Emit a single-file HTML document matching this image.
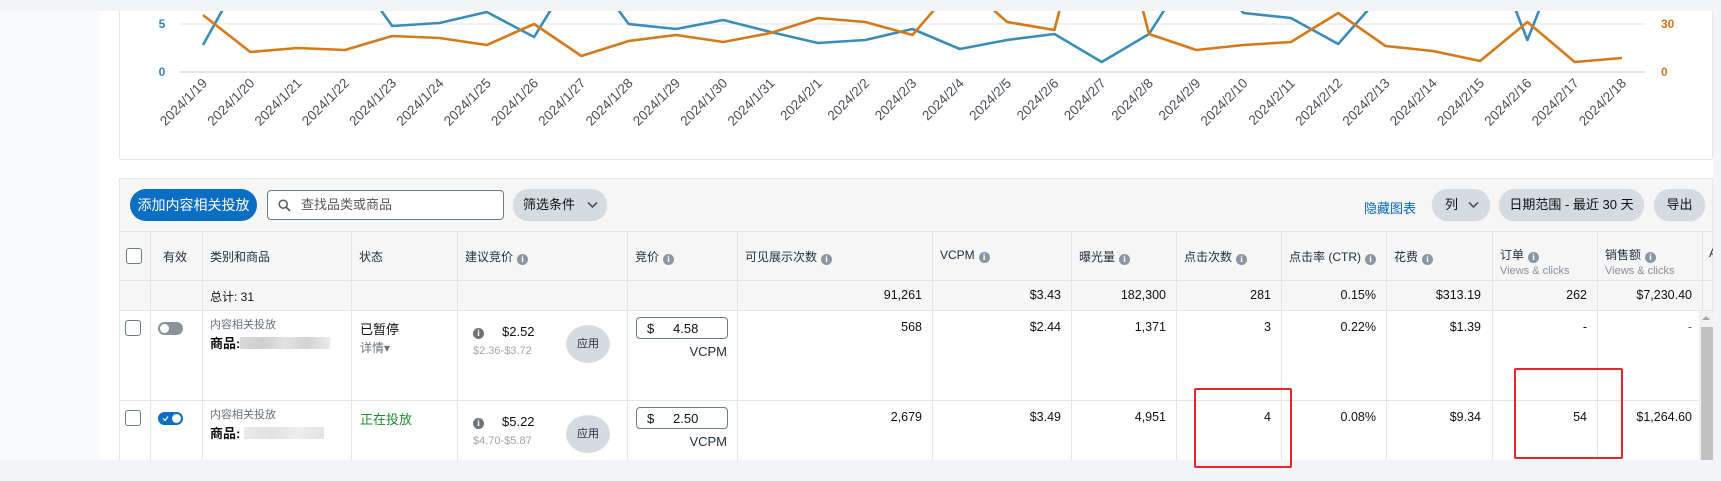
<!DOCTYPE html>
<html><head><meta charset="utf-8">
<style>
*{margin:0;padding:0;box-sizing:border-box}
body{width:1721px;height:481px;overflow:hidden;background:#f3f4f7;font-family:"Liberation Sans","Noto Sans CJK SC",sans-serif;color:#0f1111;position:relative}
.abs{position:absolute}
.left{left:0;top:11px;width:100px;height:449px;background:#f9fafb}
.main{left:100px;top:11px;width:1613px;height:449px;background:#fff}
.card{border:1px solid #e3e6e6;border-radius:3px;background:#fff}
.t{position:absolute;font-size:12.5px;white-space:nowrap}
.r{text-align:right}
.hd{font-size:12px;color:#232f3e}
.i{display:inline-block;width:11px;height:11px;border-radius:50%;background:#8b96a3;color:#fff;font-size:9px;line-height:11px;text-align:center;font-weight:bold;vertical-align:-1px;margin-left:4px;font-family:"Liberation Serif",serif}
.vl{position:absolute;width:1px;background:#e3e6e6}
.hl{position:absolute;height:1px;background:#e3e6e6}
.pill{position:absolute;border-radius:16px;background:#d5dbe1;font-size:13px;color:#0f1111;text-align:center;box-shadow:0 1px 1px rgba(0,0,0,.15)}
.cb{position:absolute;width:16px;height:16px;border:1px solid #6f7b8b;border-radius:3px;background:#fff}
.apply{position:absolute;width:44px;height:38px;border-radius:50%;background:#d5dbe1;font-size:11px;line-height:38px;text-align:center;color:#232f3e}
.inp{position:absolute;width:92px;height:22px;border:1px solid #6f7b8b;border-radius:4px;font-size:13px}
.blur{position:absolute;height:12px;background:linear-gradient(90deg,#d8d8d8,#cfcfcf,#e2e2e2,#d2d2d2,#ececec)}
</style></head><body>
<div class="abs left"></div>
<div class="abs main"></div>
<div class="abs card" style="left:119px;top:0px;width:1594px;height:160px;border-top:none"></div>
<div class="abs" style="left:0;top:0;width:1721px;height:11px;background:#f3f4f7"></div>
<svg class="abs" style="left:0;top:0" width="1721" height="160" viewBox="0 0 1721 160">
<defs><clipPath id="c"><rect x="119" y="11" width="1594" height="148"/></clipPath></defs>
<line x1="180" y1="24" x2="1645" y2="24" stroke="#e3e6e6" stroke-width="1"/>
<line x1="180" y1="72" x2="1645" y2="72" stroke="#c3cad4" stroke-width="1"/>
<g font-family="Liberation Sans, sans-serif" font-size="12" font-weight="bold">
<text x="162" y="28" fill="#3c83b5" text-anchor="middle">5</text>
<text x="162" y="76" fill="#3c83b5" text-anchor="middle">0</text>
<text x="1661" y="28" fill="#d4761c">30</text>
<text x="1661" y="76" fill="#d4761c">0</text>
</g>
<g clip-path="url(#c)" fill="none" stroke-width="2.6" stroke-linejoin="round">
<polyline stroke="#3a8db8" points="203,45 250.3,-40 297.6,-40 344.9,-40 392.2,26 439.5,23 486.8,12 534.1,37 581.4,-40 628.7,24 676,29 723.3,20 770.6,32 817.9,43 865.2,40 912.5,29 959.8,49 1007.1,40 1054.4,34 1101.7,62 1149,34 1196.3,-40 1243.6,13 1290.9,18 1338.2,44 1385.5,-10 1432.8,-40 1480.1,-80 1527.4,40 1574.7,-80 1622,-80"/>
<polyline stroke="#d47a1a" points="203,15 250.3,52 297.6,48 344.9,50 392.2,36 439.5,38 486.8,45 534.1,24 581.4,56 628.7,41 676,35 723.3,42 770.6,33 817.9,18 865.2,22 912.5,35 959.8,-20 1007.1,22 1054.4,30 1101.7,-150 1149,34 1196.3,50 1243.6,45 1290.9,42 1338.2,13 1385.5,46 1432.8,51 1480.1,61 1527.4,22 1574.7,62 1622,58"/>
</g>
<g font-family="Liberation Sans, sans-serif" font-size="13.5" fill="#4a4f55" text-anchor="end">
<text transform="translate(208,84) rotate(-45)">2024/1/19</text>
<text transform="translate(255.3,84) rotate(-45)">2024/1/20</text>
<text transform="translate(302.6,84) rotate(-45)">2024/1/21</text>
<text transform="translate(349.9,84) rotate(-45)">2024/1/22</text>
<text transform="translate(397.2,84) rotate(-45)">2024/1/23</text>
<text transform="translate(444.5,84) rotate(-45)">2024/1/24</text>
<text transform="translate(491.8,84) rotate(-45)">2024/1/25</text>
<text transform="translate(539.1,84) rotate(-45)">2024/1/26</text>
<text transform="translate(586.4,84) rotate(-45)">2024/1/27</text>
<text transform="translate(633.7,84) rotate(-45)">2024/1/28</text>
<text transform="translate(681,84) rotate(-45)">2024/1/29</text>
<text transform="translate(728.3,84) rotate(-45)">2024/1/30</text>
<text transform="translate(775.6,84) rotate(-45)">2024/1/31</text>
<text transform="translate(822.9,84) rotate(-45)">2024/2/1</text>
<text transform="translate(870.2,84) rotate(-45)">2024/2/2</text>
<text transform="translate(917.5,84) rotate(-45)">2024/2/3</text>
<text transform="translate(964.8,84) rotate(-45)">2024/2/4</text>
<text transform="translate(1012.1,84) rotate(-45)">2024/2/5</text>
<text transform="translate(1059.4,84) rotate(-45)">2024/2/6</text>
<text transform="translate(1106.7,84) rotate(-45)">2024/2/7</text>
<text transform="translate(1154,84) rotate(-45)">2024/2/8</text>
<text transform="translate(1201.3,84) rotate(-45)">2024/2/9</text>
<text transform="translate(1248.6,84) rotate(-45)">2024/2/10</text>
<text transform="translate(1295.9,84) rotate(-45)">2024/2/11</text>
<text transform="translate(1343.2,84) rotate(-45)">2024/2/12</text>
<text transform="translate(1390.5,84) rotate(-45)">2024/2/13</text>
<text transform="translate(1437.8,84) rotate(-45)">2024/2/14</text>
<text transform="translate(1485.1,84) rotate(-45)">2024/2/15</text>
<text transform="translate(1532.4,84) rotate(-45)">2024/2/16</text>
<text transform="translate(1579.7,84) rotate(-45)">2024/2/17</text>
<text transform="translate(1627,84) rotate(-45)">2024/2/18</text>
</g>
</svg>

<div class="abs" style="left:119px;top:178px;width:1594px;height:282px;background:#fff;border:1px solid #e3e6e6;border-bottom:none;overflow:hidden">
<div class="abs" style="left:0;top:0;width:1594px;height:132px;background:#f6f6f6"></div>
</div>
<div class="hl" style="left:119px;top:231px;width:1594px"></div>
<div class="hl" style="left:119px;top:280px;width:1594px"></div>
<div class="hl" style="left:119px;top:310px;width:1594px"></div>
<div class="hl" style="left:119px;top:400px;width:1580px"></div>
<div class="vl" style="left:150px;top:231px;height:229px"></div>
<div class="vl" style="left:202px;top:231px;height:229px"></div>
<div class="vl" style="left:351px;top:231px;height:229px"></div>
<div class="vl" style="left:457px;top:231px;height:229px"></div>
<div class="vl" style="left:627px;top:231px;height:229px"></div>
<div class="vl" style="left:737px;top:231px;height:229px"></div>
<div class="vl" style="left:932px;top:231px;height:229px"></div>
<div class="vl" style="left:1071px;top:231px;height:229px"></div>
<div class="vl" style="left:1176px;top:231px;height:229px"></div>
<div class="vl" style="left:1281px;top:231px;height:229px"></div>
<div class="vl" style="left:1386px;top:231px;height:229px"></div>
<div class="vl" style="left:1492px;top:231px;height:229px"></div>
<div class="vl" style="left:1597px;top:231px;height:229px"></div>
<div class="vl" style="left:1702px;top:231px;height:79px"></div>

<div class="abs" style="left:130px;top:189px;width:127px;height:32px;border-radius:16px;background:#0a6fc2;color:#fff;font-size:14px;line-height:32px;text-align:center">添加内容相关投放</div>
<div class="abs" style="left:267px;top:190px;width:237px;height:30px;border:1px solid #6f7b8b;border-radius:4px;background:#fff;font-size:13px;line-height:28px;color:#565959;padding-left:33px">查找品类或商品
<svg class="abs" style="left:10px;top:8px" width="13" height="13" viewBox="0 0 13 13"><circle cx="5.2" cy="5.2" r="4" fill="none" stroke="#565959" stroke-width="1.5"/><line x1="8.2" y1="8.2" x2="12" y2="12" stroke="#565959" stroke-width="1.6"/></svg></div>
<div class="pill" style="left:513px;top:189px;width:94px;height:31px;line-height:31px;text-align:left;padding-left:10px">筛选条件<svg class="abs" style="left:74px;top:12px" width="11" height="8" viewBox="0 0 11 8"><path d="M1 1.5 L5.5 6 L10 1.5" fill="none" stroke="#4a5561" stroke-width="1.6"/></svg></div>
<div class="t" style="left:1364px;top:198px;font-size:13px;color:#0066c0">隐藏图表</div>
<div class="pill" style="left:1432px;top:189px;width:58px;height:31px;line-height:31px;text-align:left;padding-left:13px">列<svg class="abs" style="left:36px;top:12px" width="11" height="8" viewBox="0 0 11 8"><path d="M1 1.5 L5.5 6 L10 1.5" fill="none" stroke="#4a5561" stroke-width="1.6"/></svg></div>
<div class="pill" style="left:1499px;top:189px;width:145px;height:31px;line-height:31px">日期范围 - 最近 30 天</div>
<div class="pill" style="left:1654px;top:189px;width:51px;height:31px;line-height:31px">导出</div>

<div class="cb" style="left:126px;top:248px"></div>
<div class="t hd" style="left:163px;top:248px">有效</div>
<div class="t hd" style="left:210px;top:248px">类别和商品</div>
<div class="t hd" style="left:359px;top:248px">状态</div>
<div class="t hd" style="left:465px;top:248px">建议竞价<span class="i">i</span></div>
<div class="t hd" style="left:635px;top:248px">竞价<span class="i">i</span></div>
<div class="t hd" style="left:745px;top:248px">可见展示次数<span class="i">i</span></div>
<div class="t hd" style="left:940px;top:248px">VCPM<span class="i">i</span></div>
<div class="t hd" style="left:1079px;top:248px">曝光量<span class="i">i</span></div>
<div class="t hd" style="left:1184px;top:248px">点击次数<span class="i">i</span></div>
<div class="t hd" style="left:1289px;top:248px">点击率 (CTR)<span class="i">i</span></div>
<div class="t hd" style="left:1394px;top:248px">花费<span class="i">i</span></div>
<div class="t hd" style="left:1500px;top:246px">订单<span class="i">i</span></div>
<div class="t" style="left:1500px;top:265px;font-size:11px;color:#8a9099">Views &amp; clicks</div>
<div class="t hd" style="left:1605px;top:246px">销售额<span class="i">i</span></div>
<div class="t" style="left:1605px;top:265px;font-size:11px;color:#8a9099">Views &amp; clicks</div>
<div class="t hd" style="left:1709px;top:246px">A</div>

<div class="t" style="left:210px;top:288px;font-size:12px">总计: 31</div>
<div class="t r" style="right:799px;top:288px">91,261</div>
<div class="t r" style="right:660px;top:288px">$3.43</div>
<div class="t r" style="right:555px;top:288px">182,300</div>
<div class="t r" style="right:450px;top:288px">281</div>
<div class="t r" style="right:345px;top:288px">0.15%</div>
<div class="t r" style="right:240px;top:288px">$313.19</div>
<div class="t r" style="right:134px;top:288px">262</div>
<div class="t r" style="right:29px;top:288px">$7,230.40</div>

<div class="cb" style="left:125px;top:320px"></div>
<div class="abs" style="left:158px;top:322px;width:25px;height:13px;border-radius:7px;background:#8a929c"><div class="abs" style="left:2px;top:2px;width:9px;height:9px;border-radius:50%;background:#fff"></div></div>
<div class="t" style="left:210px;top:316px;font-size:11px;color:#6b7079">内容相关投放</div>
<div class="t" style="left:210px;top:333px;font-size:13px;font-weight:bold">商品:</div>
<div class="blur" style="left:240px;top:337px;width:90px"></div>
<div class="t" style="left:360px;top:319px;font-size:13px">已暂停</div>
<div class="t" style="left:360px;top:339px;font-size:12px;color:#6b7079">详情▾</div>
<div class="t" style="left:473px;top:324px"><span class="i" style="background:#6f7479;margin:0">i</span></div>
<div class="t" style="left:502px;top:324px;font-size:13px">$2.52</div>
<div class="t" style="left:473px;top:345px;font-size:11px;color:#a0a6ad">$2.36-$3.72</div>
<div class="apply" style="left:566px;top:325px">应用</div>
<div class="inp" style="left:636px;top:317px"><span class="abs" style="left:10px;top:3px">$</span><span class="abs" style="left:36px;top:3px">4.58</span></div>
<div class="t r" style="right:994px;top:344px;font-size:13px;color:#232f3e">VCPM</div>
<div class="t r" style="right:799px;top:320px">568</div>
<div class="t r" style="right:660px;top:320px">$2.44</div>
<div class="t r" style="right:555px;top:320px">1,371</div>
<div class="t r" style="right:450px;top:320px">3</div>
<div class="t r" style="right:345px;top:320px">0.22%</div>
<div class="t r" style="right:240px;top:320px">$1.39</div>
<div class="t r" style="right:134px;top:320px">-</div>
<div class="t r" style="right:29px;top:320px;color:#666">-</div>

<div class="cb" style="left:125px;top:410px"></div>
<div class="abs" style="left:158px;top:412px;width:25px;height:13px;border-radius:7px;background:#0a6fc2"><div class="abs" style="right:2px;top:2px;width:9px;height:9px;border-radius:50%;background:#fff"></div><svg class="abs" style="left:4px;top:3px" width="7" height="7" viewBox="0 0 7 7"><path d="M1 3.5 L3 5.5 L6 1.5" fill="none" stroke="#fff" stroke-width="1.2"/></svg></div>
<div class="t" style="left:210px;top:406px;font-size:11px;color:#6b7079">内容相关投放</div>
<div class="t" style="left:210px;top:423px;font-size:13px;font-weight:bold">商品:</div>
<div class="blur" style="left:244px;top:427px;width:80px;background:linear-gradient(90deg,#eaeaea,#e2e2e2,#ececec,#e4e4e4)"></div>
<div class="t" style="left:360px;top:409px;font-size:13px;color:#1f8a2c">正在投放</div>
<div class="t" style="left:473px;top:414px"><span class="i" style="background:#6f7479;margin:0">i</span></div>
<div class="t" style="left:502px;top:414px;font-size:13px">$5.22</div>
<div class="t" style="left:473px;top:435px;font-size:11px;color:#a0a6ad">$4.70-$5.87</div>
<div class="apply" style="left:566px;top:415px">应用</div>
<div class="inp" style="left:636px;top:407px"><span class="abs" style="left:10px;top:3px">$</span><span class="abs" style="left:36px;top:3px">2.50</span></div>
<div class="t r" style="right:994px;top:434px;font-size:13px;color:#232f3e">VCPM</div>
<div class="t r" style="right:799px;top:410px">2,679</div>
<div class="t r" style="right:660px;top:410px">$3.49</div>
<div class="t r" style="right:555px;top:410px">4,951</div>
<div class="t r" style="right:450px;top:410px">4</div>
<div class="t r" style="right:345px;top:410px">0.08%</div>
<div class="t r" style="right:240px;top:410px">$9.34</div>
<div class="t r" style="right:134px;top:410px">54</div>
<div class="t r" style="right:29px;top:410px">$1,264.60</div>

<div class="abs" style="left:1699px;top:311px;width:14px;height:149px;background:#f1f1f1"></div>
<div class="abs" style="left:1701px;top:327px;width:12px;height:133px;background:#c1c1c1"></div>
<div class="abs" style="left:1702px;top:316px;width:0;height:0;border-left:4px solid transparent;border-right:4px solid transparent;border-bottom:4px solid #a3a3a3"></div>

<div class="abs" style="left:0;top:460px;width:1721px;height:21px;background:#f3f4f7"></div>
<div class="abs" style="left:1713px;top:0;width:8px;height:481px;background:#f3f4f7"></div>

<div class="abs" style="left:1194px;top:388px;width:98px;height:80px;border:2px solid #e5262b;border-radius:2px"></div>
<div class="abs" style="left:1514px;top:368px;width:109px;height:91px;border:2px solid #e5262b;border-radius:2px"></div>
</body></html>
